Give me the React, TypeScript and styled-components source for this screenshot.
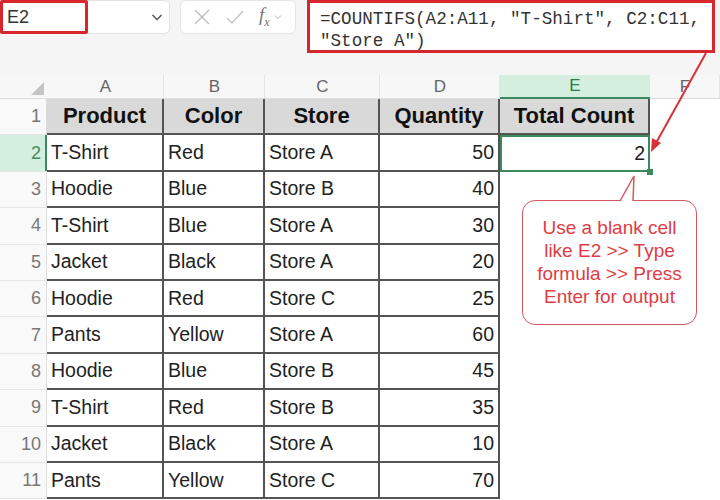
import React from "react";
import styled, { createGlobalStyle, css } from "styled-components";

const GlobalStyle = createGlobalStyle`
  html, body {
    margin: 0;
    padding: 0;
    background: #ffffff;
  }
  body {
    font-family: "Liberation Sans", Arial, sans-serif;
    color: #222;
  }
`;

const COLS = ["A", "B", "C", "D", "E", "F"];
const HEADERS = ["Product", "Color", "Store", "Quantity"];

const ROWS: [string, string, string, number][] = [
  ["T-Shirt", "Red", "Store A", 50],
  ["Hoodie", "Blue", "Store B", 40],
  ["T-Shirt", "Blue", "Store A", 30],
  ["Jacket", "Black", "Store A", 20],
  ["Hoodie", "Red", "Store C", 25],
  ["Pants", "Yellow", "Store A", 60],
  ["Hoodie", "Blue", "Store B", 45],
  ["T-Shirt", "Red", "Store B", 35],
  ["Jacket", "Black", "Store A", 10],
  ["Pants", "Yellow", "Store C", 70],
];

const Page = styled.div`
  position: relative;
  width: 720px;
  height: 500px;
  overflow: hidden;
  background: #fff;
`;

const TopBar = styled.div`
  display: flex;
  align-items: flex-start;
  height: 75px;
  background: #f5f5f5;
`;

const NameBox = styled.div`
  display: flex;
  align-items: center;
  width: 170px;
  height: 34px;
  background: #fff;
  border: 1px solid #e3e3e3;
  border-radius: 5px;
  box-sizing: border-box;
`;

const RedFrame = styled.div`
  width: 88px;
  height: 34px;
  box-sizing: border-box;
  border: 3px solid #d8262d;
  border-radius: 2px;
  padding-left: 4px;
  display: flex;
  align-items: center;
  font-size: 18px;
  color: #333;
  margin-left: -1px;
`;

const Chevron = styled.span`
  margin-left: auto;
  margin-right: 5px;
  display: flex;
`;

const FxBox = styled.div`
  display: flex;
  align-items: center;
  gap: 14px;
  margin-left: 10px;
  width: 116px;
  height: 34px;
  padding-left: 12px;
  box-sizing: border-box;
  background: #fff;
  border: 1px solid #e6e6e6;
  border-radius: 6px;
`;

const FxLabel = styled.span`
  font-family: "Liberation Serif", serif;
  font-style: italic;
  font-size: 19px;
  color: #777;
  sub {
    font-size: 12px;
  }
`;

const FormulaBox = styled.div`
  margin-left: 11px;
  width: 408px;
  height: 53px;
  box-sizing: border-box;
  border: 3px solid #d8262d;
  background: #fff;
  padding: 5px 0 0 10px;
  font-family: "Liberation Mono", "DejaVu Sans Mono", monospace;
  font-size: 17.6px;
  line-height: 22px;
  color: #333;
  white-space: pre;
`;

const Sheet = styled.div`
  display: grid;
  grid-template-columns: 47px 117px 101px 115px 120px 150px 1fr;
  grid-template-rows: 24px repeat(11, 36.4px);
`;

const Corner = styled.div`
  position: relative;
  background: #f7f7f7;
  border-bottom: 1px solid #dedede;
  &::after {
    content: "";
    position: absolute;
    right: 3px;
    bottom: 3px;
    border-style: solid;
    border-width: 0 0 13px 13px;
    border-color: transparent transparent #c4c4c4 transparent;
  }
`;

const ColHead = styled.div<{ $active?: boolean }>`
  display: flex;
  align-items: center;
  justify-content: center;
  font-size: 17px;
  color: #666;
  background: #f7f7f7;
  border-bottom: 1px solid #dedede;
  box-shadow: inset -1px 0 0 #e4e4e4;
  ${(p) =>
    p.$active &&
    css`
      background: #d4efdf;
      color: #2c7a4e;
      border-bottom: 2px solid #3b8a5d;
    `}
`;

const RowHead = styled.div<{ $active?: boolean }>`
  display: flex;
  align-items: center;
  justify-content: flex-end;
  padding-right: 6px;
  font-size: 18px;
  color: #777;
  background: #f9f9f9;
  border-bottom: 1px solid #e6e6e6;
  box-shadow: inset -1px 0 0 #dcdcdc;
  ${(p) =>
    p.$active &&
    css`
      background: #d4efdf;
      color: #3f8b5f;
      box-shadow: inset -2px 0 0 #3b8a5d;
    `}
`;

const Cell = styled.div<{ $head?: boolean; $num?: boolean }>`
  display: flex;
  align-items: center;
  padding: 0 4px;
  font-size: 19.5px;
  color: #222;
  border-right: 2px solid #545454;
  border-bottom: 2px solid #545454;
  justify-content: ${(p) => (p.$num ? "flex-end" : "flex-start")};
  ${(p) =>
    p.$head &&
    css`
      background: #d9d9d9;
      font-weight: bold;
      font-size: 22px;
      justify-content: center;
      color: #111;
    `}
`;

const SelectedCell = styled.div`
  position: relative;
  display: flex;
  align-items: center;
  justify-content: flex-end;
  padding: 0 5px;
  font-size: 19.5px;
  color: #222;
  box-shadow: inset 0 0 0 2px #3b8a5d;
  &::after {
    content: "";
    position: absolute;
    right: -3px;
    bottom: -3px;
    width: 6px;
    height: 6px;
    background: #3b8a5d;
  }
`;

const Blank = styled.div``;

const Callout = styled.div`
  position: absolute;
  left: 522px;
  top: 200px;
  width: 175px;
  height: 125px;
  box-sizing: border-box;
  border: 1.5px solid #d4585d;
  border-radius: 13px;
  background: #fff;
  display: flex;
  align-items: center;
  justify-content: center;
  text-align: center;
  font-size: 19px;
  line-height: 23px;
  color: #e03c44;
  padding-bottom: 2px;
  white-space: nowrap;
`;

const Overlay = styled.svg`
  position: absolute;
  left: 0;
  top: 0;
  pointer-events: none;
`;

export default function App() {
  return (
    <Page>
      <GlobalStyle />
      <TopBar>
        <NameBox>
          <RedFrame>E2</RedFrame>
          <Chevron>
            <svg width="14" height="14" viewBox="0 0 14 14">
              <path d="M2.5 5 L7 9.5 L11.5 5" fill="none" stroke="#555" strokeWidth="1.5" />
            </svg>
          </Chevron>
        </NameBox>
        <FxBox>
          <svg width="18" height="18" viewBox="0 0 18 18">
            <path d="M2 2 L16 16 M16 2 L2 16" stroke="#bdbdbd" strokeWidth="1.4" />
          </svg>
          <svg width="20" height="18" viewBox="0 0 20 18">
            <path d="M2 10 L7 15 L18 3" fill="none" stroke="#c4c4c4" strokeWidth="1.4" />
          </svg>
          <FxLabel>
            f<sub>x</sub>
          </FxLabel>
          <svg width="8" height="8" viewBox="0 0 8 8" style={{ marginLeft: -10 }}>
            <path d="M1 2.5 L4 5.5 L7 2.5" fill="none" stroke="#bbb" strokeWidth="1" />
          </svg>
        </FxBox>
        <FormulaBox>
          {'=COUNTIFS(A2:A11, "T-Shirt", C2:C11,\n"Store A")'}
        </FormulaBox>
      </TopBar>

      <Sheet>
        <Corner />
        {COLS.map((c) => (
          <ColHead key={c} $active={c === "E"}>
            {c}
          </ColHead>
        ))}

        <RowHead>1</RowHead>
        {HEADERS.map((h) => (
          <Cell key={h} $head>
            {h}
          </Cell>
        ))}
        <Cell $head>Total Count</Cell>
        <Blank />

        {ROWS.map((r, i) => (
          <React.Fragment key={i}>
            <RowHead $active={i === 0}>{i + 2}</RowHead>
            <Cell>{r[0]}</Cell>
            <Cell>{r[1]}</Cell>
            <Cell>{r[2]}</Cell>
            <Cell $num>{r[3]}</Cell>
            {i === 0 ? <SelectedCell>2</SelectedCell> : <Blank />}
            <Blank />
          </React.Fragment>
        ))}
      </Sheet>

      <Callout>
        Use a blank cell
        <br />
        like E2 &gt;&gt; Type
        <br />
        formula &gt;&gt; Press
        <br />
        Enter for output
      </Callout>

      <Overlay width="720" height="500" viewBox="0 0 720 500">
        {/* callout tail pointing up at E2 */}
        <polygon points="620,201.5 634,176 633,201.5" fill="#fff" />
        <path d="M620 201 L634 176 L633 201" fill="none" stroke="#d4585d" strokeWidth="1.5" />
        {/* arrow from the formula bar down to E2 */}
        <line x1="706" y1="53" x2="656" y2="143" stroke="#d8313a" strokeWidth="2" />
        <polygon points="651,152 652,138 661,143" fill="#d8313a" />
      </Overlay>
    </Page>
  );
}
